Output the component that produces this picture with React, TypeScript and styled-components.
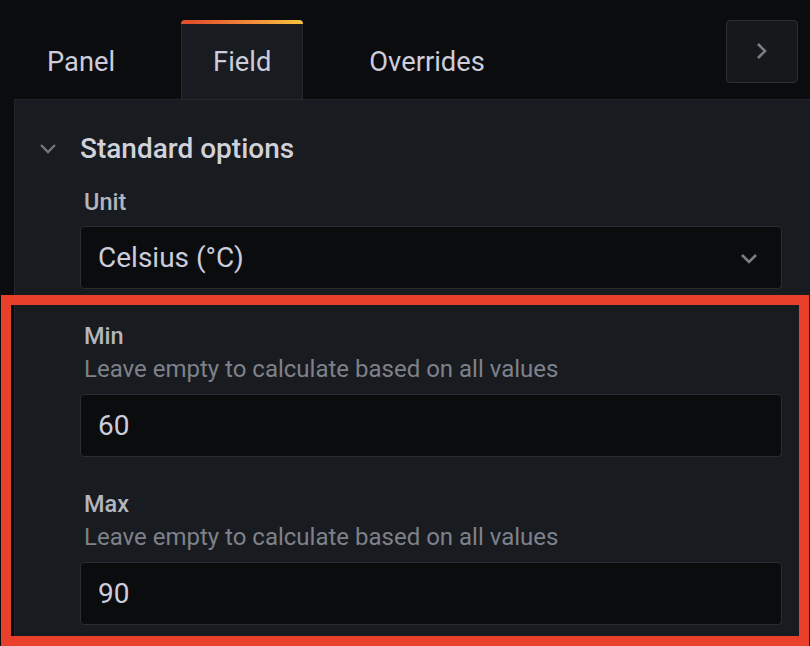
import styled, { createGlobalStyle, css } from "styled-components";

const GlobalStyle = createGlobalStyle`
  html, body {
    margin: 0;
    padding: 0;
    background: #0b0c0e;
  }
  body {
    font-family: Roboto, "Liberation Sans", sans-serif;
    color: #ccccdc;
    -webkit-font-smoothing: antialiased;
  }
`;

const fields = [
  { label: "Min", value: "60" },
  { label: "Max", value: "90" },
];

const App = () => {
  return (
    <>
      <GlobalStyle />
      <Page>
        <TabBar>
          <Tab>Panel</Tab>
          <Tab $active>Field</Tab>
          <Tab>Overrides</Tab>
          <CollapseButton>
            <svg width="14" height="20" viewBox="0 0 14 20">
              <polyline
                points="3,3 10,10 3,17"
                fill="none"
                stroke="#7c7e86"
                strokeWidth="2.6"
              />
            </svg>
          </CollapseButton>
        </TabBar>
        <Panel>
          <SectionHeader>
            <svg width="24" height="14" viewBox="0 0 24 14">
              <polyline
                points="5,3 12,10 19,3"
                fill="none"
                stroke="#74767e"
                strokeWidth="2.4"
              />
            </svg>
            <span>Standard options</span>
          </SectionHeader>
          <Fields>
            <Field>
              <Label>Unit</Label>
              <InputBox>
                <span>Celsius (°C)</span>
                <svg width="18" height="12" viewBox="0 0 18 12">
                  <polyline
                    points="2,2 9,9 16,2"
                    fill="none"
                    stroke="#7c7e86"
                    strokeWidth="2.6"
                  />
                </svg>
              </InputBox>
            </Field>
            {fields.map((f) => (
              <Field key={f.label}>
                <Label>{f.label}</Label>
                <Description>Leave empty to calculate based on all values</Description>
                <InputBox>
                  <span>{f.value}</span>
                </InputBox>
              </Field>
            ))}
          </Fields>
        </Panel>
        <Highlight />
      </Page>
    </>
  );
};

export default App;

const Page = styled.div`
  position: relative;
  width: 810px;
  height: 646px;
  overflow: hidden;
  padding-top: 20px;
  box-sizing: border-box;
  display: flex;
  flex-direction: column;
`;

const TabBar = styled.div`
  position: relative;
  z-index: 1;
  height: 79px;
  display: flex;
  align-items: flex-start;
  gap: 34px;
  padding-left: 15px;
`;

const Tab = styled.div<{ $active?: boolean }>`
  height: 80px;
  box-sizing: border-box;
  padding: 4px 31px 0;
  display: flex;
  align-items: center;
  font-size: 27.3px;
  color: #ccccdc;
  border: 1px solid transparent;
  border-top: none;

  ${(p) =>
    p.$active &&
    css`
      position: relative;
      background: #181b1f;
      border-color: #25282d;
      border-radius: 4px 4px 0 0;
      &::before {
        content: "";
        position: absolute;
        top: 0;
        left: -1px;
        right: -1px;
        height: 4px;
        border-radius: 4px 4px 0 0;
        background: linear-gradient(to right, #e2502c 10%, #f0883a 55%, #f7c43c 100%);
      }
    `}
`;

const CollapseButton = styled.div`
  margin-left: auto;
  margin-right: 12px;
  width: 72px;
  height: 63px;
  box-sizing: border-box;
  border: 1px solid #2c2f35;
  border-radius: 4px;
  background: #16181c;
  display: flex;
  align-items: center;
  justify-content: center;
  padding-bottom: 2px;
`;

const Panel = styled.div`
  flex: 1;
  margin-left: 14px;
  margin-right: -20px;
  background: #181b1f;
  border-left: 1px solid #22252a;
  border-top: 1px solid #22252a;
  padding-top: 24px;
`;

const SectionHeader = styled.div`
  height: 48px;
  display: flex;
  align-items: center;
  padding-left: 21px;
  gap: 20px;
  font-size: 28px;
  font-weight: 500;
  color: #d0d1d9;
  margin-bottom: 14px;

  svg {
    margin-top: 2px;
  }
`;

const Fields = styled.div`
  padding-left: 65px;
  width: 702px;
`;

const Field = styled.div`
  margin-bottom: 31px;
`;

const Label = styled.div`
  font-size: 23.5px;
  font-weight: 500;
  line-height: 30px;
  padding-top: 1px;
  color: #b4b6be;
  padding-left: 4px;
`;

const Description = styled.div`
  font-size: 24px;
  line-height: 32px;
  margin-top: 2px;
  color: #7f818a;
  padding-left: 4px;
`;

const InputBox = styled.div`
  margin-top: 9px;
  height: 63px;
  box-sizing: border-box;
  border: 1.5px solid #2a2d32;
  border-radius: 4px;
  background: #0b0c0e;
  display: flex;
  align-items: center;
  justify-content: space-between;
  padding: 0 23px 0 17px;
  font-size: 28px;
  color: #ccccdc;

  svg {
    margin-top: 2px;
  }
`;

const Highlight = styled.div`
  position: absolute;
  left: 1px;
  top: 295px;
  width: 808px;
  height: 351px;
  box-sizing: border-box;
  border: 10px solid #e8402a;
  pointer-events: none;
`;
